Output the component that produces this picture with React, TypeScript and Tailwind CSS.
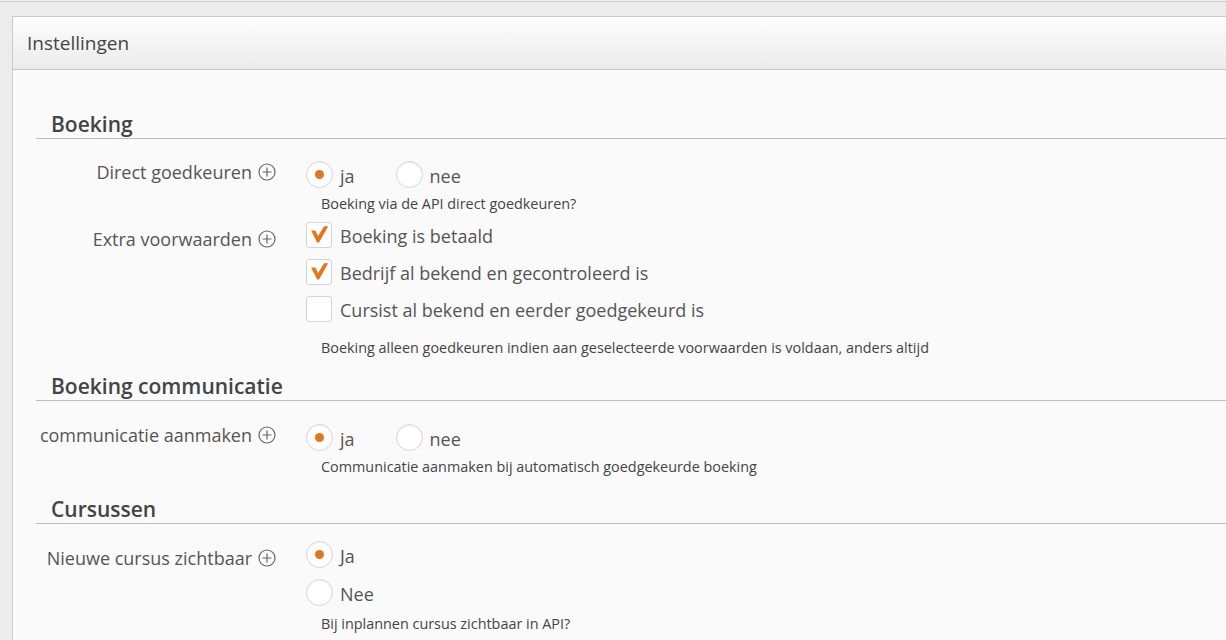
import type { ReactNode } from "react";

const font = { fontFamily: '"Open Sans", "Liberation Sans", sans-serif' };

function PlusIcon() {
  return (
    <svg width="18" height="18" viewBox="0 0 18 18" fill="none" stroke="#666" strokeWidth={1.2} className="shrink-0">
      <circle cx="9" cy="9" r="8" />
      <path d="M9 4.5v9M4.5 9h9" />
    </svg>
  );
}

function Radio({ checked, label }: { checked?: boolean; label: string }) {
  return (
    <label className="flex items-start h-[27px]">
      <span className="w-[27px] h-[27px] rounded-full bg-white border border-[#d6d6d6] shadow-[inset_0_1px_2px_rgba(0,0,0,0.06)] flex items-center justify-center shrink-0">
        {checked && <span className="w-[9px] h-[9px] rounded-full bg-[#e2761f]" />}
      </span>
      <span className="ml-[7px] mt-[2px] text-[18px] leading-[27px] text-[#555]">{label}</span>
    </label>
  );
}

function Checkbox({ checked, label }: { checked?: boolean; label: string }) {
  return (
    <label className="flex items-start h-[26px]">
      <span className="w-[26px] h-[26px] rounded-[3px] bg-white border border-[#d4d4d4] flex items-center justify-center shrink-0">
        {checked && (
          <svg width="26" height="26" viewBox="0 0 26 26">
            <polygon points="4.5,8 9,8 12,14 18.5,3.5 23,3.5 13,21 11,21" fill="#e2761f" />
          </svg>
        )}
      </span>
      <span className="ml-[8px] mt-[1px] text-[18px] leading-[26px] text-[#555]">{label}</span>
    </label>
  );
}

function SectionTitle({ title, className }: { title: string; className: string }) {
  return (
    <h3 className={`ml-[23px] pl-[15px] border-b border-[#bdbdbd] text-[21px] leading-[28px] font-semibold text-[#444] ${className}`}>
      {title}
    </h3>
  );
}

function Row({ label, labelTop, children, className }: { label: string; labelTop: string; children: ReactNode; className: string }) {
  return (
    <div className={`flex items-start ml-[23px] ${className}`}>
      <div className={`w-[240px] flex items-center justify-end gap-[6px] text-[18px] leading-[24px] text-[#555] ${labelTop}`}>
        <span>{label}</span>
        <PlusIcon />
      </div>
      <div className="ml-[30px]">{children}</div>
    </div>
  );
}

function Help({ text, className }: { text: string; className: string }) {
  return <p className={`ml-[15px] text-[14.4px] leading-[18px] text-[#444] ${className}`}>{text}</p>;
}

export default function App() {
  return (
    <div className="h-[640px] bg-[#ececec] overflow-hidden" style={font}>
      <div className="h-[2px] bg-[#f3f3f3] border-b border-[#cdcdcd]" />
      <div className="mt-[14px] ml-[12px] border border-r-0 border-[#cbcbcb] bg-[#fafafa] pb-[40px]">
        <div className="h-[53px] bg-gradient-to-b from-[#fdfdfd] to-[#ebebeb] border-b border-[#c9c9c9] flex items-center pl-[14px]">
          <h2 className="text-[19px] text-[#444]">Instellingen</h2>
        </div>

        <SectionTitle title="Boeking" className="mt-[40px]" />

        <Row label="Direct goedkeuren" labelTop="mt-[21px]" className="">
          <div className="flex gap-[41px] mt-[22px]">
            <Radio checked label="ja" />
            <Radio label="nee" />
          </div>
          <Help text="Boeking via de API direct goedkeuren?" className="mt-[7px]" />
        </Row>

        <Row label="Extra voorwaarden" labelTop="mt-[5px]" className="mt-[9px]">
          <div className="flex flex-col gap-[11px]">
            <Checkbox checked label="Boeking is betaald" />
            <Checkbox checked label="Bedrijf al bekend en gecontroleerd is" />
            <Checkbox label="Cursist al bekend en eerder goedgekeurd is" />
          </div>
          <Help
            text="Boeking alleen goedkeuren indien aan geselecteerde voorwaarden is voldaan, anders altijd"
            className="mt-[17px]"
          />
        </Row>

        <SectionTitle title="Boeking communicatie" className="mt-[15px]" />

        <Row label="communicatie aanmaken" labelTop="mt-[22px]" className="">
          <div className="flex gap-[41px] mt-[23px]">
            <Radio checked label="ja" />
            <Radio label="nee" />
          </div>
          <Help text="Communicatie aanmaken bij automatisch goedgekeurde boeking" className="mt-[7px]" />
        </Row>

        <SectionTitle title="Cursussen" className="mt-[19px]" />

        <Row label="Nieuwe cursus zichtbaar" labelTop="mt-[22px]" className="">
          <div className="flex flex-col gap-[11px] mt-[17px]">
            <Radio checked label="Ja" />
            <Radio label="Nee" />
          </div>
          <Help text="Bij inplannen cursus zichtbaar in API?" className="mt-[9px]" />
        </Row>
      </div>
    </div>
  );
}
